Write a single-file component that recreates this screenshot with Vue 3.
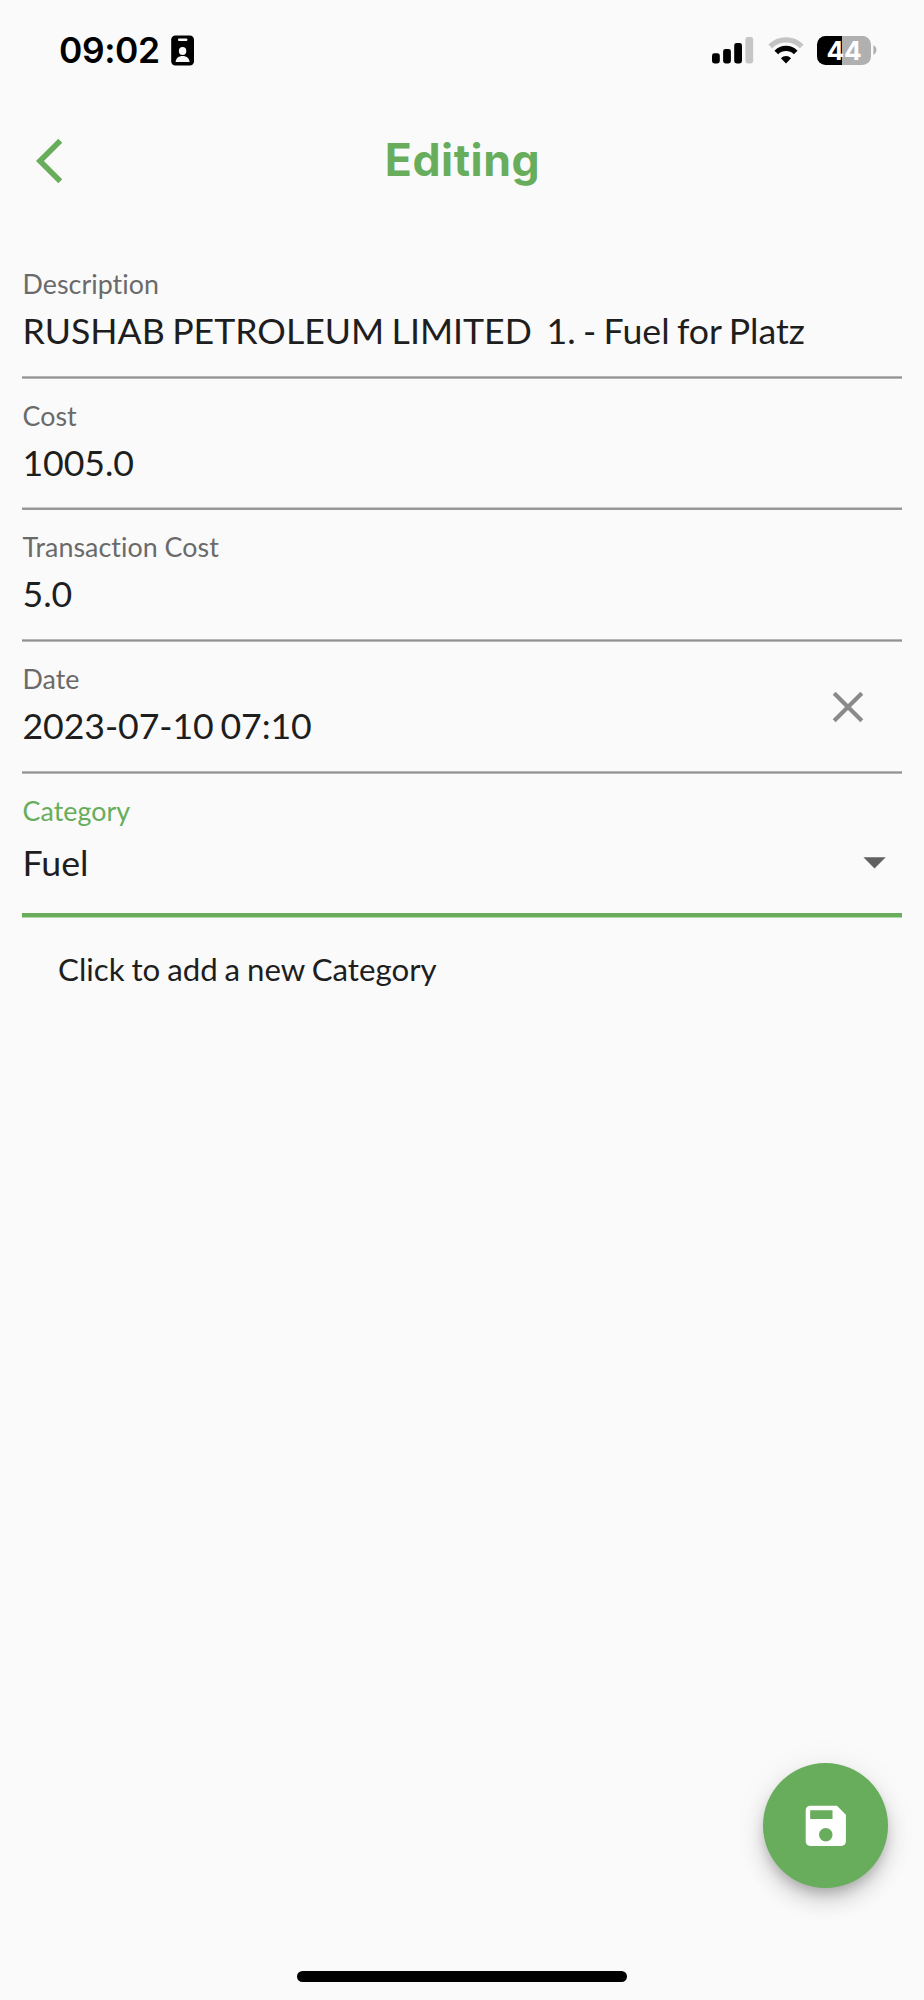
<script setup>
const fields = [
  { label: 'Description', value: 'RUSHAB PETROLEUM LIMITED  1. - Fuel for Platz', kind: 'desc' },
  { label: 'Cost', value: '1005.0', kind: 'cost' },
  { label: 'Transaction Cost', value: '5.0', kind: 'fee' },
  { label: 'Date', value: '2023-07-10 07:10', kind: 'date', clearable: true },
]
</script>

<template>
  <div class="screen">
    <header class="status">
      <div class="clock">
        <span class="time">09:02</span>
        <svg class="badge" width="24" height="32" viewBox="0 0 24 32">
          <rect x="0.2" y="0.4" width="22.8" height="30.2" rx="4.2" fill="#000" />
          <rect x="7" y="3.6" width="9.4" height="2.4" rx="1" fill="#fafafa" />
          <ellipse cx="11.6" cy="16" rx="3.7" ry="4.1" fill="#fafafa" />
          <path d="M4.6 27c.4-4 3.2-6 7-6s6.6 2 7 6z" fill="#fafafa" />
        </svg>
      </div>
      <div class="indicators">
        <svg class="signal" width="42" height="28" viewBox="0 0 42 28">
          <rect x="0" y="17.3" width="7.8" height="10.2" rx="2.4" />
          <rect x="11.1" y="13" width="7.8" height="14.5" rx="2.4" />
          <rect x="22.2" y="7" width="7.8" height="20.5" rx="2.4" />
          <rect x="33.4" y="1" width="7.8" height="26.5" rx="2.4" fill="#c6c6c6" />
        </svg>
        <svg class="wifi" width="36" height="28" viewBox="0 0 36 28">
          <path d="M2.2 10.4a22.2 22.2 0 0 1 31.6 0" fill="none" stroke="#c4c4c4" stroke-width="5.2" />
          <path d="M8.3 16.5a13.7 13.7 0 0 1 19.4 0" fill="none" stroke="#000" stroke-width="5.2" />
          <path d="M18 27.5l-5.100-5.300a7.300 7.300 0 0 1 10.200 0z" />
        </svg>
        <div class="battery"><span>44</span></div>
        <svg class="nub" width="4" height="10" viewBox="0 0 4 10">
          <path d="M.4.3c2 .6 3 2.5 3 4.700s-1 4.100-3 4.700z" fill="#b0b0b0" />
        </svg>
      </div>
    </header>

    <nav class="bar">
      <svg class="back" width="54" height="54" viewBox="0 0 24 24">
        <path d="M11.67 3.87L9.9 2.1 0 12l9.9 9.9 1.77-1.77L3.54 12z" fill="#67ad5b" />
      </svg>
      <h1>Editing</h1>
    </nav>

    <main class="form">
      <div v-for="field in fields" :key="field.label" class="field" :class="field.kind">
        <div class="label">{{ field.label }}</div>
        <div class="value">{{ field.value }}</div>
        <svg v-if="field.clearable" class="clear" width="32" height="32" viewBox="0 0 32 32">
          <path d="M2.2 2.2l27.600 27.600M29.800 2.200L2.200 29.800" stroke="#8a8a8a" stroke-width="4.2" />
        </svg>
      </div>
      <div class="field category">
        <div class="label">Category</div>
        <div class="select">
          <div class="value">Fuel</div>
          <svg width="23" height="12" viewBox="0 0 23 12"><path d="M.4.3h22.3L11.550 11.500z" fill="#616161" /></svg>
        </div>
      </div>
      <div class="add">Click to add a new Category</div>
    </main>

    <button class="fab" aria-label="Save">
      <svg width="53.6" height="53.6" viewBox="0 0 24 24">
        <path d="M17 3H5c-1.110 0-2 .9-2 2v14c0 1.100.89 2 2 2h14c1.100 0 2-.9 2-2V7l-4-4zm-5 16c-1.660 0-3-1.340-3-3s1.340-3 3-3 3 1.340 3 3-1.340 3-3 3zm3-10H5V5h10v4z" fill="#fff" />
      </svg>
    </button>
    <div class="home"></div>
  </div>
</template>

<style>
body { background: #fafafa; }
</style>

<style scoped>
.screen {
  box-sizing: border-box;
  width: 924px;
  height: 2000px;
  display: flex;
  flex-direction: column;
  background: #fafafa;
  overflow: hidden;
  font-family: Lato, sans-serif;
  font-variant-ligatures: none;
  color: #1e1e1e;
}
.status {
  height: 100px;
  padding: 0 47px 0 59px;
  display: flex;
  align-items: center;
  justify-content: space-between;
  font-family: Inter, sans-serif;
}
.clock, .indicators { display: flex; align-items: center; }
.time {
  width: 112px;
  padding-top: 2px;
  font-size: 35.4px;
  line-height: 44px;
  font-weight: 600;
  letter-spacing: -0.4px;
  color: #000;
  white-space: nowrap;
}
.badge { margin-top: 2px; }
.signal, .wifi { margin-right: 14px; }
.wifi { margin-right: 13.5px; }
.battery {
  width: 54px;
  height: 29px;
  border-radius: 8.5px;
  background: linear-gradient(90deg, #000 24.7px, #b0b0b0 24.7px);
  color: #fff;
  font-size: 26.2px;
  line-height: 29px;
  font-weight: 700;
  letter-spacing: -0.3px;
  text-align: center;
}
.nub { margin-left: 2px; }
.bar {
  height: 121px;
  padding-left: 36px;
  display: grid;
  grid-template-columns: 54px 1fr;
  align-items: center;
}
h1 {
  margin: 0 89px 1px 0;
  text-align: center;
  font-family: Inter, sans-serif;
  font-size: 44.6px;
  line-height: 54px;
  font-weight: 700;
  letter-spacing: 0.55px;
  color: #67ad5b;
}
.form { padding: 26px 22px 0; }
.field {
  position: relative;
  box-sizing: border-box;
  padding: 21px 0 0 0.5px;
  background: linear-gradient(#b6b6b6 1px, #929292 1px, #929292 2px, #b6b6b6 2px) left bottom / 100% 3px no-repeat;
}
.desc, .fee, .date { height: 132px; }
.cost {
  height: 131px;
  background: linear-gradient(#c9c9c9 1px, #989898 1px) left bottom / 100% 3px no-repeat;
}
.label {
  font-size: 26.8px;
  line-height: 32px;
  letter-spacing: 0.05px;
  color: #6a6a6a;
}
.value {
  margin-top: 9px;
  font-size: 35.7px;
  line-height: 43px;
  white-space: pre;
}
.desc .value { word-spacing: -1.8px; }
.cost .value { letter-spacing: -0.1px; }
.date .value { letter-spacing: -0.1px; word-spacing: -2.2px; }
.clear { position: absolute; left: 810px; top: 49px; }
.category {
  height: 143px;
  background: #fafafa;
  border-bottom: 4px solid #67ad5b;
  box-shadow: 0 1px 0 #b4d6ae;
}
.category .label { color: #67ad5b; }
.select {
  margin-top: 14px;
  padding-right: 16px;
  display: flex;
  align-items: center;
  justify-content: space-between;
}
.select .value { margin-top: 0; }
.add {
  margin: 33px 0 0 36px;
  font-size: 31.25px;
  line-height: 38px;
  word-spacing: -1.1px;
}
.fab {
  width: 125px;
  height: 125px;
  margin: auto 36px 83px auto;
  padding: 0;
  border: 0;
  border-radius: 50%;
  background: #67ad5b;
  display: grid;
  place-items: center;
  flex: none;
  box-shadow: 0 7px 11px -2px rgba(0, 0, 0, 0.18), 0 13px 22px rgba(0, 0, 0, 0.15), 0 3px 36px rgba(0, 0, 0, 0.06);
}
.home {
  width: 330px;
  height: 11px;
  flex: none;
  margin: 0 auto 18px;
  border-radius: 6px;
  background: #000;
}
</style>
